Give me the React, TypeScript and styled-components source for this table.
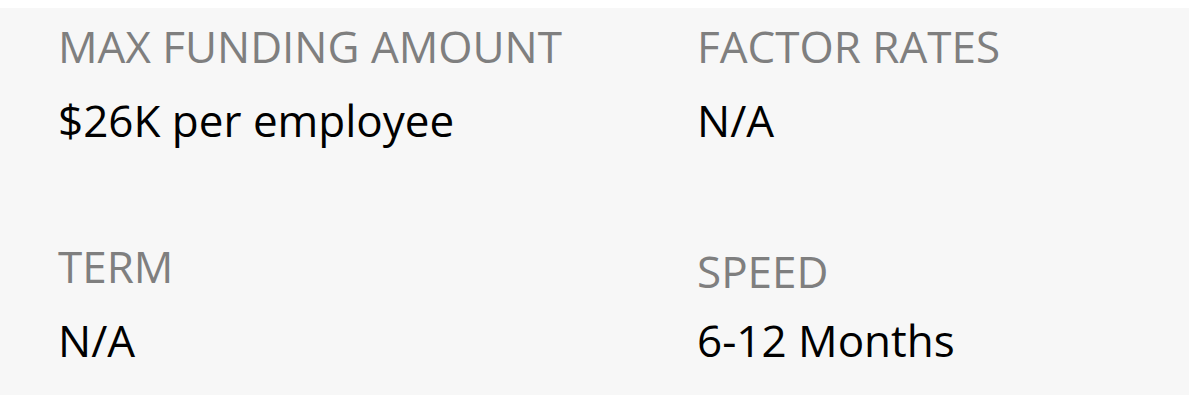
import React from 'react';
import styled, { createGlobalStyle } from 'styled-components';

const GlobalStyle = createGlobalStyle`
  body {
    margin: 0;
    background: #ffffff;
    font-family: "Open Sans", "Noto Sans", sans-serif;
  }
`;

const Panel = styled.div`
  margin-top: 8px;
  background: #f7f7f7;
  padding: 0 0 19px 58px;
  display: grid;
  grid-template-columns: 639px 1fr;
  row-gap: 72px;
`;

const Cell = styled.div`
  display: flex;
  flex-direction: column;
`;

const Label = styled.div<{ $drop?: number }>`
  font-size: 44px;
  line-height: 76px;
  color: #7f7f7f;
  white-space: nowrap;
  padding-top: ${p => p.$drop || 0}px;
  margin-bottom: ${p => -(p.$drop || 0)}px;
`;

const Value = styled.div`
  font-size: 44px;
  line-height: 72px;
  color: #000000;
  white-space: nowrap;
`;

const items = [
  { label: 'MAX FUNDING AMOUNT', value: '$26K per employee' },
  { label: 'FACTOR RATES', value: 'N/A' },
  { label: 'TERM', value: 'N/A' },
  { label: 'SPEED', value: '6-12 Months', drop: 5 },
];

const App: React.FC = () => {
  return (
    <>
      <GlobalStyle />
      <Panel>
        {items.map(item => (
          <Cell key={item.label}>
            <Label $drop={item.drop}>{item.label}</Label>
            <Value>{item.value}</Value>
          </Cell>
        ))}
      </Panel>
    </>
  );
};

export default App;
